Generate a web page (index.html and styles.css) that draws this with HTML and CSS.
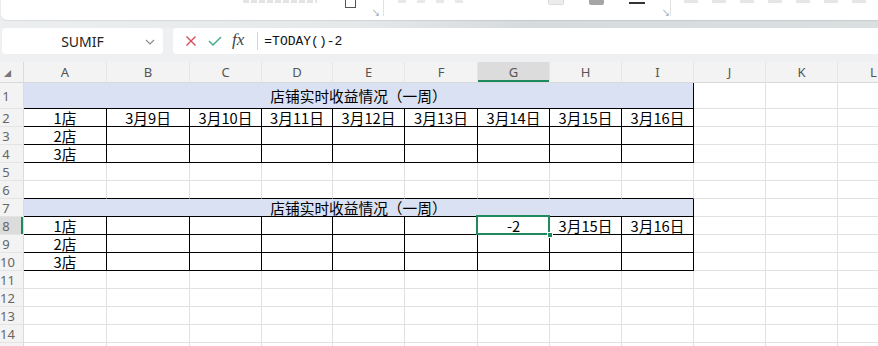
FILE: index.html
```html
<!DOCTYPE html>
<html lang="zh-CN">
<head>
  <meta charset="UTF-8" />
  <meta name="viewport" content="width=device-width, initial-scale=1.0" />
  <title>店铺实时收益情况</title>
  <link rel="stylesheet" href="styles.css">
</head>
<body>
  <div class="ribbon">
    <div class="ribbon-panel">
      <span class="faint-text">&nbsp;</span>
      <span class="box-icon"></span>
      <span class="launcher">↘</span>
      <span class="sep"></span>
      <span class="faint-icons"></span>
      <span class="swatch light"></span>
      <span class="swatch dark"></span>
      <span class="underline-icon"></span>
      <span class="launcher second">↘</span>
      <span class="sep second"></span>
      <span class="faint-icons wide"></span>
    </div>
  </div>

  <div class="formula-bar">
    <div class="name-box">
      <span>SUMIF</span>
      <svg class="chevron" width="10" height="6" viewBox="0 0 10 6"><path d="M1 1 L5 5 L9 1" fill="none" stroke="#8a8a8a" stroke-width="1.1"/></svg>
    </div>
    <div class="formula-box">
      <svg class="fb-icon" width="12" height="12" viewBox="0 0 12 12"><path d="M1.5 1.5 L10.5 10.5 M10.5 1.5 L1.5 10.5" stroke="#d94a5c" stroke-width="1.4"/></svg>
      <svg class="fb-icon" width="14" height="10" viewBox="0 0 14 10"><path d="M1 5 L5 9 L13 1" fill="none" stroke="#3fa98a" stroke-width="1.4"/></svg>
      <span class="fx">fx</span>
      <span class="fb-sep"></span>
      <span class="formula">=TODAY()-2</span>
    </div>
  </div>

  <div class="sheet-wrap">
    <table class="sheet">
      <colgroup>
        <col class="w-hd"><col class="w-a"><col class="w-a"><col class="w-n"><col class="w-d"><col class="w-n"><col class="w-f"><col class="w-n"><col class="w-n"><col class="w-n"><col class="w-n"><col class="w-n"><col class="w-n">
      </colgroup>
      <tr class="col-head">
        <th class="corner"><span>◢</span></th><th>A</th><th>B</th><th>C</th><th>D</th><th>E</th><th>F</th><th class="active">G</th><th>H</th><th>I</th><th>J</th><th>K</th><th>L</th>
      </tr>
      <tr class="r-title">
        <th>1</th><td class="title" colspan="9">店铺实时收益情况（一周）</td><td></td><td></td><td></td>
      </tr>
      <tr>
        <th>2</th><td class="b">1店</td><td class="b">3月9日</td><td class="b">3月10日</td><td class="b">3月11日</td><td class="b">3月12日</td><td class="b">3月13日</td><td class="b">3月14日</td><td class="b">3月15日</td><td class="b">3月16日</td><td></td><td></td><td></td>
      </tr>
      <tr>
        <th>3</th><td class="b">2店</td><td class="b"></td><td class="b"></td><td class="b"></td><td class="b"></td><td class="b"></td><td class="b"></td><td class="b"></td><td class="b"></td><td></td><td></td><td></td>
      </tr>
      <tr>
        <th>4</th><td class="b">3店</td><td class="b"></td><td class="b"></td><td class="b"></td><td class="b"></td><td class="b"></td><td class="b"></td><td class="b"></td><td class="b"></td><td></td><td></td><td></td>
      </tr>
      <tr>
        <th>5</th><td></td><td></td><td></td><td></td><td></td><td></td><td></td><td></td><td></td><td></td><td></td><td></td>
      </tr>
      <tr>
        <th>6</th><td class="under"></td><td class="under"></td><td class="under"></td><td class="under"></td><td class="under"></td><td class="under"></td><td class="under"></td><td class="under"></td><td class="under"></td><td></td><td></td><td></td>
      </tr>
      <tr>
        <th>7</th><td class="title" colspan="9">店铺实时收益情况（一周）</td><td></td><td></td><td></td>
      </tr>
      <tr>
        <th class="active">8</th><td class="b">1店</td><td class="b"></td><td class="b"></td><td class="b"></td><td class="b"></td><td class="b"></td><td class="b selected">-2<span class="handle"></span></td><td class="b">3月15日</td><td class="b">3月16日</td><td></td><td></td><td></td>
      </tr>
      <tr>
        <th>9</th><td class="b">2店</td><td class="b"></td><td class="b"></td><td class="b"></td><td class="b"></td><td class="b"></td><td class="b"></td><td class="b"></td><td class="b"></td><td></td><td></td><td></td>
      </tr>
      <tr>
        <th>10</th><td class="b">3店</td><td class="b"></td><td class="b"></td><td class="b"></td><td class="b"></td><td class="b"></td><td class="b"></td><td class="b"></td><td class="b"></td><td></td><td></td><td></td>
      </tr>
      <tr>
        <th>11</th><td></td><td></td><td></td><td></td><td></td><td></td><td></td><td></td><td></td><td></td><td></td><td></td>
      </tr>
      <tr>
        <th>12</th><td></td><td></td><td></td><td></td><td></td><td></td><td></td><td></td><td></td><td></td><td></td><td></td>
      </tr>
      <tr>
        <th>13</th><td></td><td></td><td></td><td></td><td></td><td></td><td></td><td></td><td></td><td></td><td></td><td></td>
      </tr>
      <tr>
        <th>14</th><td></td><td></td><td></td><td></td><td></td><td></td><td></td><td></td><td></td><td></td><td></td><td></td>
      </tr>
      <tr>
        <th></th><td></td><td></td><td></td><td></td><td></td><td></td><td></td><td></td><td></td><td></td><td></td><td></td>
      </tr>
    </table>
  </div>
</body>
</html>
```

FILE: styles.css
```css
* {
  box-sizing: border-box;
  margin: 0;
  padding: 0;
}

body {
  width: 878px;
  height: 346px;
  overflow: hidden;
  background-color: #eff0f1;
  font-family: "Noto Sans", Arial, sans-serif;
  color: #222;
}

/* ribbon remains at the top */
.ribbon {
  height: 28px;
  background: linear-gradient(90deg, #eceeef 0%, #e6e9ea 40%, #d6dbdd 60%, #dadfe0 100%);
  padding-left: 1px;
}

.ribbon-panel {
  height: 20px;
  background-color: #fff;
  border-radius: 0 0 0 6px;
  box-shadow: 0 1px 1px rgba(0, 0, 0, 0.08);
  display: flex;
  align-items: flex-start;
}

.faint-text {
  margin-left: 242px;
  width: 76px;
  height: 3px;
  background: repeating-linear-gradient(90deg, #e4e4e4 0 6px, #fff 6px 8px);
}

.box-icon {
  margin-left: 28px;
  width: 11px;
  height: 8px;
  border: 1.5px solid #555;
  border-top: none;
}

.launcher {
  margin-left: 16px;
  margin-top: 9px;
  font-size: 8px;
  line-height: 8px;
  color: #888;
}

.sep {
  margin-left: 3px;
  width: 1px;
  height: 16px;
  background-color: #e2e2e2;
}

.faint-icons {
  margin-left: 15px;
  width: 75px;
  height: 3px;
  background: repeating-linear-gradient(90deg, #e8e8e8 0 8px, #fff 8px 19px);
}

.swatch {
  width: 16px;
  height: 5px;
  border-radius: 0 0 2px 2px;
}

.swatch.light {
  margin-left: 77px;
  background-color: #ececec;
  border: 1px solid #dcdcdc;
  border-top: none;
}

.swatch.dark {
  margin-left: 25px;
  background-color: #a5a5a5;
}

.underline-icon {
  margin-left: 25px;
  margin-top: 2px;
  width: 16px;
  height: 2px;
  background-color: #333;
}

.launcher.second {
  margin-left: 17px;
}

.sep.second {
  margin-left: 0;
}

.faint-icons.wide {
  margin-left: 13px;
  width: 200px;
  background: repeating-linear-gradient(90deg, #e6e6e6 0 14px, #fff 14px 28px);
}

/* formula bar */
.formula-bar {
  height: 34px;
  display: flex;
  gap: 10px;
  padding: 0 0 8px 2px;
}

.name-box {
  width: 161px;
  background-color: #fff;
  border-radius: 4px;
  display: flex;
  align-items: center;
  justify-content: center;
  position: relative;
  font-size: 14px;
  color: #222;
}

.chevron {
  position: absolute;
  right: 8px;
  top: 11px;
}

.formula-box {
  flex: 1;
  background-color: #fff;
  border-radius: 4px 0 0 4px;
  display: flex;
  align-items: center;
  padding-left: 12px;
}

.fb-icon {
  margin-right: 11px;
}

.fx {
  font-family: "Liberation Serif", "DejaVu Serif", serif;
  font-style: italic;
  font-size: 17px;
  color: #444;
  margin-left: -1px;
  margin-top: -2px;
}

.fb-sep {
  width: 1px;
  height: 18px;
  background-color: #d4d4d4;
  margin-left: 13px;
  margin-right: 6px;
}

.formula {
  font-family: "Liberation Mono", monospace;
  font-size: 13px;
  color: #111;
}

/* grid */
.sheet-wrap {
  overflow: hidden;
}

.sheet {
  border-collapse: separate;
  border-spacing: 0;
  table-layout: fixed;
  width: 910px;
  background-color: #fff;
}

.w-hd { width: 24px; }
.w-a { width: 83px; }
.w-n { width: 72px; }
.w-d { width: 71px; }
.w-f { width: 73px; }

.sheet th,
.sheet td {
  border-right: 1px solid #e1e1e1;
  border-bottom: 1px solid #e1e1e1;
  height: 18px;
  padding: 0;
  overflow: visible;
  white-space: nowrap;
}

.sheet th {
  background-color: #f3f3f3;
  font-weight: normal;
  font-size: 13px;
  line-height: 16px;
  color: #555;
  border-color: #e4e4e4;
}

.sheet tr > th:first-child {
  text-align: center;
  padding-right: 11px;
  color: #666;
  border-right-color: #dcdcdc;
}

.col-head th {
  height: 21px;
  border-right-color: #e6e6e6;
  border-bottom-color: #d8d8d8;
}

.col-head th.corner {
  padding-right: 0;
  text-align: left;
  padding-left: 3px;
}

.corner span {
  font-size: 7px;
  color: #777;
}

.sheet th.active {
  background-color: #dcdcdc;
}

.col-head th.active {
  box-shadow: inset 0 -2px 0 #1f8a5e;
}

.sheet tr > th.active:first-child {
  box-shadow: inset -2px 0 0 #1f8a5e;
}

.sheet td {
  font-family: "Noto Sans CJK SC", "Noto Sans", sans-serif;
  font-size: 14.7px;
  line-height: 16px;
  color: #000;
  text-align: center;
  vertical-align: bottom;
}

.r-title td,
.r-title th {
  height: 26px;
}

.sheet td.title {
  background-color: #d9e1f2;
  border-right-color: #000;
  border-bottom-color: #000;
  vertical-align: middle;
}

.sheet td.b {
  border-right-color: #000;
  border-bottom-color: #000;
}

.sheet td.under {
  border-bottom-color: #000;
}

.sheet td.selected {
  position: relative;
}

.selected::before {
  content: "";
  position: absolute;
  top: -2px;
  left: -2px;
  right: -1px;
  bottom: -1px;
  border: 2px solid #1f8a5e;
}

.handle {
  position: absolute;
  right: -4px;
  bottom: -4px;
  width: 6px;
  height: 6px;
  background-color: #1f8a5e;
  border: 1px solid #fff;
}
```
